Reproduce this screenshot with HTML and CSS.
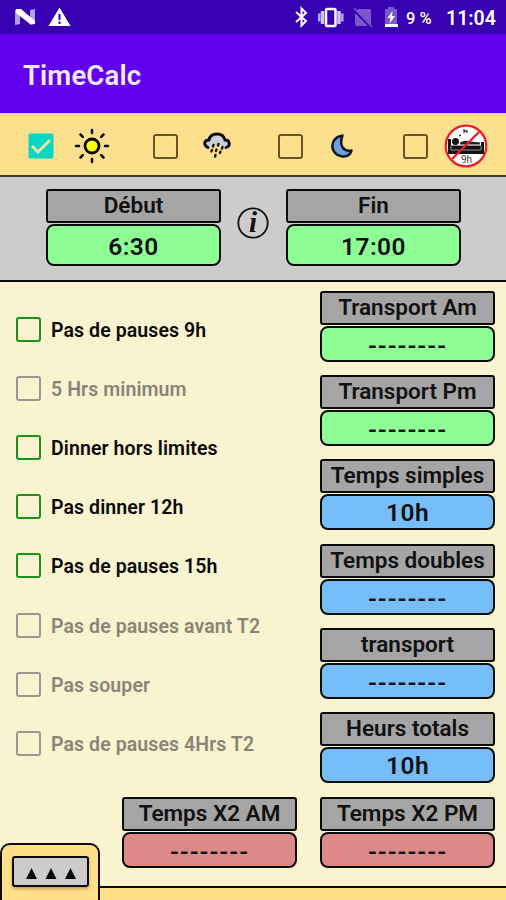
FILE: index.html
```html
<!DOCTYPE html>
<html lang="fr">
<head>
<meta charset="utf-8">
<title>TimeCalc</title>
<link rel="stylesheet" href="styles.css">
</head>
<body>
<header class="status">
  <svg class="status-left" width="56" height="22" viewBox="0 0 56 22">
    <path d="M0 4 5 3V18L0 19ZM15 4 20 3V18L15 19Z" fill="#b0a0e4"/>
    <path d="M1 3H6L20 15V18H15L1 7Z" fill="#fff"/>
    <path d="M44.500 1.500 55.500 20H33.500Z" fill="#fff"/>
    <path d="M44.500 8V14M44.500 15.500V18" stroke="#3700b3" stroke-width="2"/>
  </svg>
  <svg class="status-right" width="106" height="24" viewBox="0 0 106 24">
    <path d="M3 7 13 16 8.500 20.500V3.500L13 8 3 17" fill="none" stroke="#fff" stroke-width="2"/>
    <path d="M26.200 8.500V16.500M49.300 8.500V16.500" stroke="#b9a7e8" stroke-width="2.500"/>
    <path d="M29.500 6V19M46 6V19" stroke="#cfc3f0" stroke-width="3.500"/>
    <rect x="33" y="4" width="9.500" height="17" rx="1" fill="none" stroke="#fff" stroke-width="2.500"/>
    <path d="M65 4H76Q78 4 78 6V20L64 6ZM62 8 75 21H64Q62 21 62 19Z" fill="#7858cb"/>
    <path d="M61 3 79 22" stroke="#7858cb" stroke-width="1.500"/>
    <path d="M92 4H95V2H101V4H104V20H92Z" fill="#7858cb"/>
    <path d="M92 19H105V22H92Z" fill="#fff"/>
    <path d="M99.500 6 94.500 13H97.500L96.500 18.500 102 11H99Z" fill="#fff"/>
  </svg>
  <span class="battery">9 %</span>
  <span class="clock">11:04</span>
</header>
<div class="appbar">TimeCalc</div>
<nav class="options">
  <div class="option">
    <svg width="26" height="26" viewBox="0 0 26 26"><rect x=".5" y=".5" width="25" height="25" rx="1.500" fill="#09d6c5"/><path d="m4 13 6 6L22 7" fill="none" stroke="#fbe6a0" stroke-width="2.700"/></svg>
    <svg class="icon-sun" width="36" height="36" viewBox="0 0 36 36"><circle cx="18" cy="18" r="7" fill="#ff0" stroke="#090909" stroke-width="2.800"/><path d="M18 2v3M18 31v3M2 18h3M31 18h3M6.500 6.500l2.300 2.300M27.200 27.200l2.300 2.300M29.500 6.500l-2.300 2.300M8.800 27.200l-2.300 2.300" stroke="#090909" stroke-width="2.500" stroke-linecap="round"/></svg>
  </div>
  <div class="option">
    <span class="check"></span>
    <svg class="icon-rain" width="28" height="28" viewBox="0 0 28 28"><path d="M6 15C1 13 0 8 6 8 7 3 10 2 14 2s7 2 8 6c5 0 6 6 1 8l-8-3Z" fill="#ccd0dc"/><path d="M5 15.500C0 13 1 8 6 8 7 3 10 2 14 2s7 2 8 6c5 0 6 6 1 7.500" fill="none" stroke="#090909" stroke-width="2.800" stroke-linecap="round"/><path d="M10.500 13l-.5 1.500M15.500 12l-.5 1.500M19.500 15l-.5 1.500M9 18l-.6 1.500M13.500 17.500l-.6 1.500M17.500 19.500l-.6 1.500M12.500 23l-.4 1.500" stroke="#151515" stroke-width="2.400" stroke-linecap="round"/></svg>
  </div>
  <div class="option">
    <span class="check"></span>
    <svg class="icon-moon" width="24" height="26" viewBox="0 0 24 26"><path d="M12.500 2.500C-2 5 0 22 12 23.500c5 .4 8.500-2 9.500-6C14 19 8.500 13 12.500 2.500Z" fill="#719fdd" stroke="#101827" stroke-width="2.500" stroke-linejoin="round"/></svg>
  </div>
  <div class="option">
    <span class="check"></span>
    <svg class="icon-bed" width="44" height="44" viewBox="0 0 44 44"><circle cx="22" cy="22" r="20.300" fill="#fff"/><path d="M4 15h3v9h30v-6h3v12H4Z" fill="#111"/><circle cx="11.500" cy="17.500" r="3.500" fill="#111"/><path d="M16 18.500q5-3 10-1l10 1v2H16ZM8 22h30v5H8Z" fill="#222"/><path d="M7 21.500h30V26H7Z" fill="#111" stroke="#999" stroke-width=".9"/><text x="22.500" y="39" class="nine">9h</text><path d="M15 11.500h2M20 9V5M20 7h3v2" stroke="#333" stroke-width="1.300" fill="none"/><path d="M8 35 35 8" stroke="#ee1c24" stroke-width="2.300"/><circle cx="22" cy="22" r="20.300" fill="none" stroke="#ee1c24" stroke-width="2.200"/></svg>
  </div>
</nav>
<section class="times">
  <div class="field tall"><div class="label">Début</div><div class="value green">6:30</div></div>
  <svg class="info" width="34" height="34" viewBox="0 0 34 34"><circle cx="17" cy="17" r="14.700" fill="none" stroke="#111" stroke-width="1.800"/><text x="17" y="26" class="info-i">i</text></svg>
  <div class="field tall"><div class="label">Fin</div><div class="value green">17:00</div></div>
</section>
<main class="content">
  <ul class="checks">
    <li><span class="check"></span><span>Pas de pauses 9h</span></li>
    <li class="off"><span class="check"></span><span>5 Hrs minimum</span></li>
    <li><span class="check"></span><span>Dinner hors limites</span></li>
    <li><span class="check"></span><span>Pas dinner 12h</span></li>
    <li><span class="check"></span><span>Pas de pauses 15h</span></li>
    <li class="off"><span class="check"></span><span>Pas de pauses avant T2</span></li>
    <li class="off"><span class="check"></span><span>Pas souper</span></li>
    <li class="off"><span class="check"></span><span>Pas de pauses 4Hrs T2</span></li>
  </ul>
  <div class="results">
    <div class="field"><div class="label">Transport Am</div><div class="value green dashes">--------</div></div>
    <div class="field"><div class="label">Transport Pm</div><div class="value green dashes">--------</div></div>
    <div class="field"><div class="label">Temps simples</div><div class="value blue">10h</div></div>
    <div class="field"><div class="label">Temps doubles</div><div class="value blue dashes">--------</div></div>
    <div class="field"><div class="label">transport</div><div class="value blue dashes">--------</div></div>
    <div class="field"><div class="label">Heurs totals</div><div class="value blue">10h</div></div>
  </div>
  <div class="doubles">
    <div class="field"><div class="label">Temps X2 AM</div><div class="value red dashes">--------</div></div>
    <div class="field"><div class="label">Temps X2 PM</div><div class="value red dashes">--------</div></div>
  </div>
</main>
<footer class="drawer">
  <div class="tab"><button class="handle"><svg width="52" height="14" viewBox="0 0 52 14"><path d="M1 12 6.500 1 12 12ZM20.500 12 26 1 31.500 12ZM40 12 45.500 1 51 12Z" fill="#080808"/></svg></button></div>
</footer>
</body>
</html>
```
FILE: styles.css
```css
* { box-sizing: border-box; }
body {
  margin: 0;
  width: 506px;
  height: 900px;
  overflow: hidden;
  display: flex;
  flex-direction: column;
  background: #faf3cf;
  font-family: Roboto, "Liberation Sans", sans-serif;
  font-weight: 600;
  color: #111;
}
.status {
  height: 34px;
  flex: none;
  display: flex;
  align-items: center;
  background: #3700b3;
  color: #fff;
  padding: 0 11px 0 15px;
}
.status-right { margin-left: auto; }
.battery { margin-left: 7px; width: 29px; font-size: 16.500px; font-weight: 500; white-space: nowrap; padding-top: 2px; }
.clock { margin-left: 11px; width: 49px; font-size: 19.500px; white-space: nowrap; padding-top: 2px; }
.appbar {
  height: 79px;
  flex: none;
  padding: 3px 0 0 23px;
  line-height: 78px;
  background: #6200ee;
  color: #f4eaff;
  font-size: 27.500px;
  letter-spacing: .15px;
}
.options {
  height: 64px;
  flex: none;
  display: grid;
  grid-template-columns: 125px 124.500px 125px 103.500px;
  padding: 4px 0 0 28px;
  background: linear-gradient(#ecd08d, #fde08e 4px);
  border-bottom: 2px solid #403b30;
}
.option { display: flex; align-items: center; }
.check { width: 25px; height: 25px; flex: none; border: 2px solid #695327; border-radius: 3px; }
.icon-sun { margin-left: 20px; }
.icon-rain { margin-left: 25px; }
.icon-moon { margin-left: 27px; }
.icon-bed { margin-left: 16px; }
.nine { font-size: 10px; font-weight: 400; text-anchor: middle; fill: #444; }
.times {
  height: 105px;
  flex: none;
  display: flex;
  align-items: flex-start;
  padding: 12px 0 0 46px;
  background: #ccc;
  border-bottom: 2px solid #0c0c0c;
}
.info { margin: 17px 16px 0 15px; }
.info-i { font: italic bold 29px "Liberation Serif", serif; text-anchor: middle; fill: #111; }
.field { width: 175px; height: 71px; flex: none; display: flex; flex-direction: column; justify-content: space-between; }
.label, .value { border: 2px solid #0c0c0c; text-align: center; white-space: nowrap; }
.label { height: 34px; line-height: 28px; font-size: 22.500px; background: #a5a5a5; border-radius: 3px; }
.value { height: 36px; line-height: 34px; font-size: 24.500px; letter-spacing: .5px; border-radius: 8px; }
.dashes { line-height: 36px; letter-spacing: .9px; }
.tall { height: 77px; }
.tall .value { height: 42px; line-height: 41px; }
.green { background: #8dff94; }
.blue { background: #75bdfb; }
.red { background: #dd8989; }
.content {
  height: 604px;
  flex: none;
  display: grid;
  grid-template-columns: 304px 175px;
  grid-template-rows: 506.500px 71px;
  padding: 8.500px 11px 0 16px;
}
.checks { list-style: none; margin: 0; padding: 9.500px 0 0; font-size: 19.500px; letter-spacing: .09px; color: #080808; }
.checks li { height: 59.100px; display: flex; align-items: center; gap: 10px; white-space: nowrap; }
.checks li span:last-child { padding-top: 2px; }
.checks .check { border-color: #199219; }
.checks .off { color: #888578; }
.checks .off .check { border-color: #9b9690; }
.results { display: flex; flex-direction: column; gap: 13.400px; }
.doubles { grid-column: 1 / 3; display: flex; justify-content: flex-end; gap: 23px; }
.drawer { height: 14px; flex: none; position: relative; border-top: 2px solid #0c0c0c; background: #ffdf87; }
.tab {
  position: absolute;
  left: 0;
  bottom: 0;
  width: 100px;
  height: 57px;
  padding: 11px 0 0 10px;
  background: #ffdf87;
  border: 2px solid #0c0c0c;
  border-bottom: 0;
  border-radius: 10px 10px 0 0;
}
.handle { display: flex; align-items: center; justify-content: center; width: 77px; height: 31px; padding: 4px 0 0; border: 2px solid #0c0c0c; border-radius: 3px; background: #ccc; box-shadow: 0 2px 3px #8a733f88; }
```
